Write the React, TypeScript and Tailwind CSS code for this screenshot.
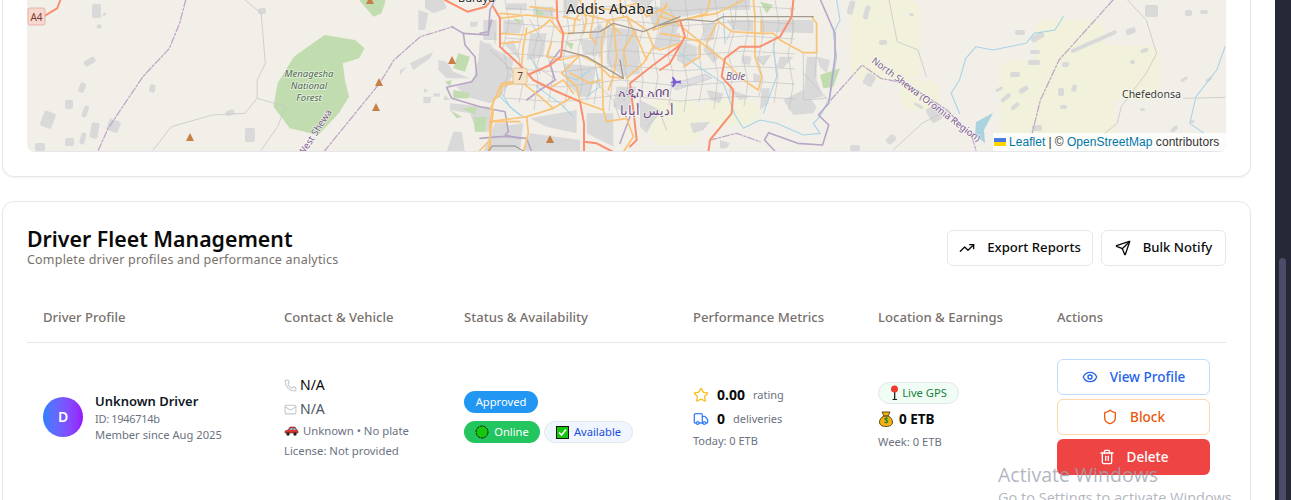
import React from 'react';
import { Eye, Mail, Phone, Send, Shield, Star, Trash2, TrendingUp, Truck } from 'lucide-react';

// Map features are read off the screenshot crops, each with its own crop scale
type Crop = 'left' | 'right' | 'center' | 'east' | 'west';

const toPoints = (crop: Crop, pts: number[]) => {
  const out: string[] = [];
  for (let i = 0; i < pts.length; i += 2) {
    const x = pts[i];
    const y = pts[i + 1] / 3;
    if (crop === 'left') out.push(`${x / 2.45},${y}`);
    if (crop === 'right') out.push(`${640 + x / 2.41},${y}`);
    if (crop === 'center') out.push(`${480 + x / 3},${y}`);
    if (crop === 'east') out.push(`${660 + x / 3},${y}`);
    if (crop === 'west') out.push(`${400 + x / 3},${y}`);
  }
  return out.join(' ');
};

type Line = [Crop, number[]];

const urbanAreas: Line[] = [
  ['west', [75, 0, 130, 0, 140, 25, 100, 40, 75, 25]],
  ['west', [55, 30, 85, 40, 75, 90, 55, 90]],
  ['west', [210, 65, 235, 65, 230, 80, 210, 80]],
  ['west', [115, 180, 140, 185, 160, 215, 210, 235, 140, 235, 115, 210]],
  ['west', [30, 190, 100, 155, 90, 175, 40, 210]],
  ['west', [0, 210, 20, 200, 0, 225]],
  ['west', [240, 120, 340, 180, 330, 250, 300, 290, 270, 310, 200, 290, 170, 260, 220, 240, 235, 180]],
  ['west', [150, 310, 270, 320, 270, 395, 230, 395, 210, 340, 150, 330]],
  ['west', [160, 395, 185, 395, 195, 456, 140, 456]],
  ['west', [285, 370, 320, 370, 320, 456, 250, 456]],
  ['west', [70, 265, 85, 270, 75, 280]],
  ['west', [70, 290, 95, 290, 90, 310, 70, 310]],
  ['west', [100, 280, 120, 280, 120, 290, 100, 290]],
  ['west', [135, 285, 150, 300, 130, 300]],
  ['center', [70, 60, 130, 60, 120, 100, 70, 100]],
  ['center', [150, 100, 200, 100, 190, 170, 140, 180]],
  ['center', [70, 130, 100, 120, 120, 180]],
  ['center', [250, 190, 350, 200, 330, 290, 300, 290, 260, 250]],
  ['center', [0, 130, 30, 130, 100, 230, 60, 250, 0, 300]],
  ['center', [60, 380, 130, 370, 120, 456, 30, 456]],
  ['center', [150, 355, 290, 330, 290, 400, 200, 380]],
  ['center', [320, 340, 400, 340, 400, 440, 320, 400]],
  ['center', [380, 80, 470, 90, 480, 220, 430, 230, 380, 190]],
  ['center', [500, 20, 590, 20, 590, 60, 520, 80]],
  ['center', [540, 90, 600, 100, 600, 130, 520, 150]],
  ['center', [480, 300, 540, 330, 500, 400, 480, 380]],
  ['center', [250, 0, 300, 0, 280, 40, 250, 50]],
  ['center', [450, 0, 520, 0, 500, 30]],
  ['center', [300, 120, 360, 120, 350, 170, 310, 160]],
  ['center', [160, 20, 220, 20, 220, 50, 160, 50]],
  ['center', [80, 10, 140, 10, 140, 30, 80, 30]],
  ['center', [10, 60, 50, 60, 50, 120, 10, 120]],
  ['center', [150, 400, 300, 420, 300, 456, 130, 456]],
  ['center', [330, 100, 360, 70, 380, 100, 360, 180]],
  ['center', [410, 260, 470, 260, 440, 340, 400, 320]],
  ['east', [0, 0, 270, 0, 270, 30, 170, 30, 70, 50, 0, 40]],
  ['east', [200, 60, 280, 60, 280, 95, 220, 90]],
  ['east', [300, 60, 460, 60, 460, 100, 300, 95]],
  ['east', [0, 60, 60, 70, 40, 120, 0, 100]],
  ['east', [130, 70, 170, 70, 160, 120, 130, 125]],
  ['east', [60, 120, 110, 140, 110, 170, 80, 200, 50, 180]],
  ['east', [140, 130, 180, 170, 160, 190, 130, 150]],
  ['east', [245, 165, 275, 170, 270, 195, 245, 190]],
  ['east', [285, 170, 330, 165, 310, 195]],
  ['east', [360, 170, 400, 170, 370, 205, 350, 200]],
  ['east', [280, 220, 300, 225, 300, 245, 280, 245]],
  ['east', [305, 265, 330, 265, 325, 310, 300, 330]],
  ['east', [370, 300, 430, 270, 470, 320, 460, 340, 400, 345]],
  ['east', [440, 170, 470, 170, 470, 240, 490, 290, 430, 300]],
  ['east', [200, 265, 270, 290, 240, 300]],
  ['east', [140, 270, 190, 280, 180, 310, 150, 300]],
  ['east', [90, 370, 150, 365, 130, 390, 100, 400]],
  ['east', [180, 420, 210, 430, 200, 445, 180, 445]],
  ['east', [470, 170, 510, 180, 500, 220, 480, 200]],
];

const greenAreas: Line[] = [
  ['left', [795, 105, 870, 120, 893, 145, 880, 175, 840, 190, 845, 240, 855, 290, 830, 340, 780, 405, 710, 385, 670, 320, 680, 250, 720, 170]],
  ['left', [880, 0, 945, 0, 935, 40, 915, 50]],
  ['west', [175, 160, 210, 170, 195, 215, 160, 205]],
  ['west', [160, 270, 210, 280, 205, 295, 160, 295]],
  ['west', [220, 350, 255, 355, 255, 395, 225, 395]],
  ['west', [135, 245, 155, 240, 150, 260]],
  ['west', [150, 330, 185, 350, 170, 355]],
  ['west', [185, 325, 230, 320, 225, 345]],
  ['center', [100, 55, 125, 60, 115, 72]],
  ['center', [165, 25, 195, 40, 175, 55]],
  ['center', [255, 125, 280, 130, 275, 150]],
  ['center', [0, 350, 20, 350, 15, 385, 0, 385]],
  ['east', [300, 5, 340, 15, 320, 40]],
  ['east', [480, 225, 540, 205, 520, 260, 490, 265]],
];

const trunkRoads: Line[] = [
  ['left', [110, 47, 140, 25, 148, 0]],
  ['left', [1090, 0, 1145, 35, 1190, 20, 1205, 0]],
  ['center', [40, 20, 60, 55, 60, 140, 125, 200, 160, 240, 220, 270, 300, 305, 312, 370, 312, 456]],
  ['center', [230, 0, 232, 60, 250, 100, 243, 170, 210, 195, 150, 222]],
  ['center', [312, 425, 350, 430, 400, 456]],
  ['center', [600, 135, 520, 195, 450, 250, 460, 330, 470, 420, 450, 440]],
  ['east', [0, 210, 30, 190, 75, 110, 60, 60]],
  ['east', [400, 0, 395, 50, 360, 110, 300, 140, 240, 140, 195, 175, 185, 230, 220, 270, 215, 340, 150, 420, 145, 456]],
];

const primaryRoads: Line[] = [
  ['center', [60, 55, 140, 45, 230, 55]],
  ['center', [60, 100, 130, 105, 180, 85, 210, 60, 245, 100, 280, 100]],
  ['center', [140, 85, 130, 140, 125, 195]],
  ['center', [215, 125, 200, 170, 240, 180]],
  ['center', [240, 180, 300, 165, 350, 190, 390, 230, 430, 235]],
  ['center', [300, 165, 245, 220, 290, 260, 300, 305]],
  ['center', [30, 330, 60, 260, 100, 250]],
  ['center', [40, 330, 25, 456]],
  ['center', [30, 365, 140, 350, 220, 325, 270, 295]],
  ['center', [140, 350, 145, 400, 130, 456]],
  ['center', [300, 305, 370, 330, 380, 365, 440, 355]],
  ['center', [370, 330, 365, 190, 365, 120, 385, 60, 440, 50, 500, 90, 520, 140, 490, 190, 440, 235]],
  ['center', [280, 100, 285, 60, 300, 40, 380, 60, 420, 100]],
  ['center', [440, 50, 470, 110, 500, 180]],
  ['center', [440, 355, 460, 410, 430, 456]],
  ['center', [400, 60, 410, 170, 400, 230, 385, 270]],
  ['center', [520, 90, 600, 60]],
  ['center', [540, 30, 600, 60]],
  ['center', [300, 0, 320, 60, 310, 100]],
  ['center', [560, 10, 520, 90]],
  ['center', [600, 130, 540, 150, 520, 140]],
  ['center', [320, 20, 400, 30, 470, 10]],
  ['center', [345, 0, 340, 50, 330, 110, 350, 130]],
  ['center', [420, 0, 430, 50]],
  ['center', [480, 20, 500, 50, 560, 20]],
  ['center', [250, 50, 300, 60]],
  ['center', [150, 20, 230, 30]],
  ['center', [270, 220, 330, 250, 360, 240]],
  ['center', [215, 260, 250, 240, 280, 280]],
  ['center', [100, 250, 130, 250, 180, 290, 220, 325]],
  ['center', [460, 100, 430, 150, 440, 200]],
  ['east', [0, 50, 40, 60, 120, 125, 190, 180, 250, 240, 295, 270, 305, 230, 285, 170, 285, 50, 280, 0]],
  ['east', [0, 100, 60, 110, 120, 125, 120, 170, 70, 200]],
  ['east', [150, 0, 140, 40, 70, 60]],
  ['east', [60, 60, 170, 40, 250, 0]],
  ['east', [170, 70, 140, 130]],
  ['east', [170, 60, 215, 95, 300, 100, 340, 100, 360, 120, 430, 158, 470, 158, 470, 70, 455, 50]],
  ['east', [305, 60, 305, 100]],
  ['west', [270, 456, 270, 370, 280, 300, 300, 285, 305, 250, 340, 245]],
  ['west', [270, 365, 360, 365]],
  ['west', [235, 456, 270, 420]],
  ['west', [305, 130, 360, 125]],
  ['west', [300, 40, 360, 45]],
];

const brownRoads: Line[] = [
  ['center', [265, 100, 360, 95, 400, 70, 490, 95, 600, 50]],
  ['center', [245, 150, 320, 170, 430, 235, 420, 180]],
  ['east', [0, 75, 80, 58, 160, 65, 190, 50, 460, 50]],
];

const thinRoads: Line[] = [
  ['left', [600, 0, 640, 40, 650, 190, 630, 240, 630, 295, 700, 320, 680, 380, 640, 450]],
  ['left', [630, 295, 600, 340, 520, 345, 420, 380, 375, 450]],
  ['right', [600, 0, 620, 125, 670, 150, 690, 230]],
  ['right', [1175, 0, 1220, 60, 1245, 160, 1220, 220, 1160, 320, 1150, 370, 1080, 440]],
  ['right', [1310, 295, 1410, 292]],
  ['right', [610, 450, 680, 370, 740, 330]],
  ['east', [430, 160, 430, 300, 500, 295, 430, 220]],
  ['east', [470, 160, 465, 230]],
  ['east', [285, 170, 310, 195, 330, 165]],
  ['center', [30, 150, 100, 215, 60, 260]],
  ['center', [320, 300, 340, 240, 400, 300, 420, 360]],
  ['center', [500, 380, 540, 340, 560, 390]],
  ['center', [150, 60, 190, 130, 170, 200, 230, 240]],
  ['east', [230, 0, 225, 70, 200, 120]],
  ['east', [400, 60, 395, 130]],
  ['west', [275, 150, 340, 215]],
  ['west', [285, 95, 285, 130]],
];

// Fine street mesh over the city centre
const cityMesh: string[] = [];
for (let i = 0; i < 20; i++) {
  const x = 505 + i * 15;
  cityMesh.push(`${x},${(i * 7) % 14} ${x + 4},${22 + (i * 5) % 11} ${x - 2},${48 + (i * 3) % 13} ${x + 3},${72 + (i * 11) % 15} ${x - 1},${96 + (i * 7) % 17}`);
}
for (let j = 0; j < 7; j++) {
  const y = 8 + j * 15;
  cityMesh.push(`505,${y} 560,${y + 4} 620,${y - 3} 680,${y + 3} 745,${y - 2} 795,${y + 1}`);
}

const rivers: Line[] = [
  ['right', [1020, 50, 1000, 90, 950, 100, 930, 130, 850, 150, 810, 140, 785, 175, 770, 240, 750, 280, 770, 340]],
  ['right', [1410, 140, 1390, 210, 1340, 290, 1325, 370, 1360, 400]],
  ['east', [530, 0, 540, 60, 520, 100, 530, 170, 510, 290, 480, 350, 460, 370, 480, 400, 430, 405, 350, 370, 300, 360, 250, 385, 225, 345, 190, 250, 130, 210, 60, 160]],
  ['east', [340, 130, 350, 230, 310, 340]],
  ['east', [190, 40, 195, 130]],
  ['center', [250, 225, 290, 240, 330, 210]],
  ['center', [60, 290, 100, 330, 130, 350]],
  ['center', [170, 260, 240, 310, 280, 350]],
  ['center', [320, 290, 360, 260, 350, 220]],
  ['center', [150, 170, 180, 220]],
  ['west', [305, 280, 330, 320, 360, 345]],
];

const boundaries: Line[] = [
  ['left', [455, 0, 440, 70, 415, 145, 350, 230, 265, 385, 240, 453]],
  ['left', [795, 453, 930, 250, 965, 180, 1030, 110, 1110, 80]],
  ['right', [460, 300, 535, 195, 580, 235, 640, 250, 740, 330, 800, 410, 810, 453]],
  ['right', [1140, 0, 1075, 90, 1010, 180, 965, 300, 945, 400]],
  ['east', [150, 420, 230, 400, 300, 425]],
];

const thickBoundaries: Line[] = [
  ['west', [155, 80, 190, 100, 265, 105, 270, 30, 285, 0]],
  ['west', [190, 100, 195, 135, 225, 170, 230, 225, 215, 245, 140, 262, 155, 295, 240, 320, 315, 335, 325, 395, 315, 405, 360, 415]],
  ['center', [0, 100, 25, 95, 35, 60]],
  ['center', [0, 415, 60, 410, 85, 410, 140, 415, 155, 456]],
  ['center', [140, 300, 180, 270, 225, 240, 210, 190, 240, 150]],
  ['center', [420, 430, 450, 350]],
  ['right', [435, 0, 470, 100, 470, 170, 455, 310, 430, 345, 455, 375, 440, 435, 380, 430, 310, 398, 300, 420, 325, 453]],
];

// [x, y, width, height, rotation]
const patches: number[][] = [
  [92, 4, 9, 14, 0], [96, 26, 5, 4, -30], [102, 14, 4, 3, -30], [83, 62, 12, 6, -30], [81, 82, 6, 10, 20], [150, 84, 6, 8, 10],
  [45, 110, 12, 16, 20], [65, 100, 8, 9, 0], [85, 105, 5, 12, 20], [92, 122, 8, 16, 10], [110, 118, 12, 12, 20],
  [35, 143, 10, 8, 0], [65, 138, 9, 8, 0], [82, 132, 5, 12, 15], [245, 128, 10, 14, 0], [225, 112, 9, 5, -20],
  [258, 8, 8, 6, 0], [850, 0, 6, 14, 15],
  [866, 5, 5, 14, 15], [879, 40, 8, 5, 0], [868, 72, 10, 12, 30], [909, 13, 5, 3, 0], [925, 110, 12, 16, -30],
  [915, 102, 10, 3, 30], [885, 140, 10, 7, -40], [850, 145, 10, 6, 0], [1030, 38, 14, 6, -30], [1028, 60, 12, 5, 0],
  [1010, 72, 10, 5, 0], [1030, 50, 10, 4, 0], [1015, 30, 10, 5, 0], [1062, 62, 7, 5, 0],
  [1070, 50, 50, 4, -24], [1058, 88, 6, 8, 0], [1073, 84, 5, 7, 20], [1018, 90, 10, 5, -30], [995, 90, 8, 3, -30],
  [1000, 100, 12, 4, -40], [1010, 108, 10, 4, -40], [1032, 125, 10, 6, 0], [1060, 105, 7, 4, 0], [1125, 30, 10, 6, -20],
  [1140, 50, 8, 4, -20], [1145, 5, 13, 12, 0], [1185, 10, 7, 6, 0], [1200, 10, 8, 4, 0], [1130, 60, 5, 4, 0],
  [1180, 80, 8, 3, -30], [1170, 130, 8, 4, -40], [1190, 120, 5, 3, 0], [1140, 108, 5, 3, 0], [1205, 80, 7, 3, -30],
];

const pale: number[][] = [
  [850, 0, 70, 80, 0], [900, 80, 40, 30, 0], [1000, 60, 115, 90, 0], [1035, 20, 70, 60, 0], [1090, 45, 70, 55, 0], [700, 100, 60, 25, 0], [650, 100, 50, 45, 0],
];

const peaks = [[190, 137], [376, 107], [379, 82], [452, 60], [370, 0], [550, 139]];

const MapPolyline = ({ line, className }: { line: Line; className: string }) => (
  <polyline points={toPoints(line[0], line[1])} fill="none" strokeLinejoin="round" strokeLinecap="round" className={className} />
);

const MapDrawing = () => (
  <svg viewBox="27 0 1199 151" width="1199" height="151" className="block">
    <rect x="27" y="0" width="1199" height="151" fill="#f2efe9" />
    <g className="blur-[0.5px]">
      {pale.map((p, i) => (
        <rect key={i} x={p[0]} y={p[1]} width={p[2]} height={p[3]} rx="12" fill="#f1f1dc" />
      ))}
      {urbanAreas.map((l, i) => <polygon key={i} points={toPoints(l[0], l[1])} fill="#d9d9d9" />)}
      {greenAreas.map((l, i) => <polygon key={i} points={toPoints(l[0], l[1])} fill="#c1dcae" />)}
      {patches.map((p, i) => (
        <rect key={i} x={p[0]} y={p[1]} width={p[2]} height={p[3]} rx="2" transform={`rotate(${p[4]} ${p[0]} ${p[1]})`} fill="#d9d9d9" />
      ))}
      <polygon points="670,85 705,74 712,78 676,90" fill="#dedee3" stroke="#c4c4c8" strokeWidth="0.6" />
      <polygon points="976,122 993,113 984,130 985,143 975,135" fill="#aad3df" />
      {cityMesh.map((p, i) => <polyline key={i} points={p} fill="none" stroke="#bdbdbd" strokeWidth="0.6" />)}
      {thinRoads.map((l, i) => <MapPolyline key={i} line={l} className="stroke-[#c6c6c6] stroke-[0.8]" />)}
      {rivers.map((l, i) => <MapPolyline key={i} line={l} className="stroke-[#a8d4e6] stroke-[1.1]" />)}
      {thickBoundaries.map((l, i) => <MapPolyline key={i} line={l} className="stroke-[#b7a6c6] stroke-[1.6]" />)}
      {boundaries.map((l, i) => <MapPolyline key={i} line={l} className="stroke-[#bfa8c6] stroke-[1.3] [stroke-dasharray:7_2_2_2]" />)}
      {primaryRoads.map((l, i) => <MapPolyline key={i} line={l} className="stroke-[#f9c478] stroke-[1.7]" />)}
      {brownRoads.map((l, i) => <MapPolyline key={i} line={l} className="stroke-[#a49a90] stroke-[1.3]" />)}
      {trunkRoads.map((l, i) => <MapPolyline key={i} line={l} className="stroke-[#fa8f70] stroke-[2]" />)}
      <polyline points="488,152 492,146 515,146 525,152" fill="none" stroke="#777" strokeWidth="0.8" />
    </g>
    {peaks.map(([x, y], i) => (
      <polygon key={i} points={`${x - 4},${y + 4} ${x + 4},${y + 4} ${x},${y - 4}`} fill="#c77f45" />
    ))}
    <path d="M670 83l3-2-1-4h1.500l3 4 4-.5 1-.5-1 2 1 2-1-.5-4-.5-3 4H672l1-4z" fill="#7b5fd0" />
    <rect x="28" y="8" width="17" height="17" rx="2" fill="#f6d8d0" stroke="#e3a99b" strokeWidth="0.8" />
    <text x="36.500" y="21" textAnchor="middle" fontSize="10" fill="#7a3a2e" fontFamily="Noto Sans">A4</text>
    <rect x="513" y="68" width="14" height="16" rx="2" fill="#f7e3c8" stroke="#dcbb8d" strokeWidth="0.8" />
    <text x="520" y="80" textAnchor="middle" fontSize="10" fill="#5a4630" fontFamily="Noto Sans">7</text>
    <g fontFamily="Noto Sans" stroke="#ffffff" strokeOpacity="0.6" strokeWidth="1.5" paintOrder="stroke">
      <text x="566" y="14" fontSize="15" fill="#222222">Addis Ababa</text>
      <text x="458" y="2" fontSize="11" fill="#222222">Burayu</text>
      <text x="309" y="77" textAnchor="middle" fontSize="9.500" fontStyle="italic" fill="#4c664c">Menagesha</text>
      <text x="309" y="89" textAnchor="middle" fontSize="9.500" fontStyle="italic" fill="#4c664c">National</text>
      <text x="309" y="101" textAnchor="middle" fontSize="9.500" fontStyle="italic" fill="#4c664c">Forest</text>
      <text x="726" y="80" fontSize="10" fontStyle="italic" fill="#7a5f8c">Bole</text>
      <text x="1122" y="98" fontSize="10.500" fill="#3a3a3a">Chefedonsa</text>
      <text x="618" y="97" fontSize="13" fill="#6f4f85">አዲስ አበባ</text>
      <text x="620" y="115" fontSize="13" fill="#6f4f85">أديس أبابا</text>
      <text transform="translate(871 62) rotate(37)" fontSize="9.500" fill="#7b5a8c">North Shewa (Oromia Region)</text>
      <text transform="translate(303 157) rotate(-57)" fontSize="9.500" fill="#7b5a8c">West Shewa</text>
    </g>
  </svg>
);

// Emoji drawn by hand, the system emoji font is not available
const CarEmoji = () => (
  <svg width="15" height="10" viewBox="0 0 15 10" className="shrink-0">
    <path d="M1 5l3-1 2-3h5l2 3 1 1v2H1z" fill="#d9362b" stroke="#5c1a14" strokeWidth="0.5" />
    <path d="M5.500 4l1.200-2h1.800v2zM9.500 2h1.300l1.200 2H9.500z" fill="#6ec6ea" />
    <circle cx="4" cy="8" r="1.700" fill="#222222" />
    <circle cx="11" cy="8" r="1.700" fill="#222222" />
  </svg>
);

const CircleEmoji = () => (
  <svg width="14" height="14" viewBox="0 0 14 14" className="shrink-0">
    <circle cx="7" cy="7" r="6" fill="#16c60c" stroke="#111111" strokeWidth="0.9" strokeDasharray="3 0.6" />
  </svg>
);

const CheckEmoji = () => (
  <svg width="13" height="13" viewBox="0 0 13 13" className="shrink-0">
    <rect x="0.500" y="0.500" width="12" height="12" fill="#16c60c" stroke="#111111" />
    <path d="M3 6.500l2.500 2.500L10 3.500" fill="none" stroke="#ffffff" strokeWidth="1.600" />
  </svg>
);

const PinEmoji = () => (
  <svg width="9" height="16" viewBox="0 0 9 16" className="shrink-0">
    <rect x="4" y="7" width="1.300" height="8" fill="#222222" />
    <rect x="2.500" y="14" width="4.500" height="1" fill="#222222" />
    <circle cx="4.500" cy="4" r="3.500" fill="#f03a2e" />
  </svg>
);

const BagEmoji = () => (
  <svg width="14" height="16" viewBox="0 0 14 16" className="shrink-0">
    <path d="M3 1h8L9 5c3 1 4.500 4 4.500 6 0 3-2.500 4.500-6.500 4.500S.500 14 .500 11c0-2 1.500-5 4.500-6z" fill="#f7b20f" stroke="#3a2a06" strokeWidth="0.8" />
    <path d="M5 5h4" stroke="#3a2a06" />
    <text x="7" y="13" textAnchor="middle" fontSize="8" fontWeight="700" fill="#0f8a3a" fontFamily="Noto Sans">$</text>
  </svg>
);

const columns = ['Driver Profile', 'Contact & Vehicle', 'Status & Availability', 'Performance Metrics', 'Location & Earnings', 'Actions'];

const App: React.FC = () => {
  return (
    <div className="relative flex h-[500px] w-full overflow-hidden bg-white font-['Noto_Sans',sans-serif]">
      <div className="flex-1 min-w-0 pl-[2px] pr-6">
        {/* Live map card, scrolled so only its lower part shows */}
        <div className="rounded-b-xl border border-t-0 border-[#e5e7eb] px-6 pb-6 shadow-[0_1px_2px_rgba(0,0,0,0.05)]">
          <div className="relative overflow-hidden rounded-b-lg border-b border-[#e5e7eb]">
            <MapDrawing />
            <div className="absolute bottom-0 right-0 flex h-[18px] w-[233px] items-center bg-white/80 pl-[1px] font-['Liberation_Sans',sans-serif] text-xs tracking-[0.06px] text-[#333333]">
              <svg width="12" height="8" viewBox="0 0 12 8" className="mr-[3px]">
                <rect width="12" height="4" fill="#4c7be1" />
                <rect y="4" width="12" height="4" fill="#ffd500" />
              </svg>
              <span className="text-[#0078a8]">Leaflet</span>
              <span className="mx-[3px]">|</span>
              <span>©&nbsp;</span>
              <span className="text-[#0078a8]">OpenStreetMap</span>
              <span>&nbsp;contributors</span>
            </div>
          </div>
        </div>

        {/* Driver table card */}
        <div className="mt-6 rounded-xl border border-[#e5e7eb] px-6 pt-6 pb-6 shadow-[0_1px_2px_rgba(0,0,0,0.05)]">
          <div className="flex items-start justify-between">
            <div>
              <h2 className="text-[21.3px] leading-[26px] font-semibold text-[#0a0a0a]">Driver Fleet Management</h2>
              <p className="text-[12.5px] leading-[16px] tracking-[0.2px] text-[#78716c]">Complete driver profiles and performance analytics</p>
            </div>
            <div className="mt-[4px] flex gap-2">
              <button className="flex h-[36px] w-[146px] items-center justify-center gap-3 rounded-md border border-[#e5e7eb] text-[13.15px] font-medium text-[#0a0a0a]">
                <TrendingUp size={16} />
                Export Reports
              </button>
              <button className="flex h-[36px] w-[125px] items-center justify-center gap-3 rounded-md border border-[#e5e7eb] text-[13.15px] font-medium text-[#0a0a0a]">
                <Send size={16} />
                Bulk Notify
              </button>
            </div>
          </div>

          <div className="mt-[26px] grid h-[49px] grid-cols-[241px_180px_229px_185px_179px_169px] items-center border-b border-[#e5e7eb] px-4">
            {columns.map(c => (
              <div key={c} className="text-[13.1px] font-medium text-[#78716c]">{c}</div>
            ))}
          </div>

          <div className="grid grid-cols-[241px_180px_229px_185px_179px_169px] items-center px-4 py-4">
            <div className="flex items-center gap-3">
              <div className="flex h-10 w-10 items-center justify-center rounded-full bg-gradient-to-r from-blue-500 to-purple-600 text-sm font-semibold text-white">D</div>
              <div>
                <div className="text-[13px] leading-[18px] font-semibold text-[#111827]">Unknown Driver</div>
                <div className="mt-[1px] text-[11px] leading-4 tracking-[-0.3px] text-[#6b7280]">ID: 1946714b</div>
                <div className="text-[11.2px] leading-4 text-[#6b7280]">Member since Aug 2025</div>
              </div>
            </div>

            <div className="text-[11.3px] text-[#6b7280]">
              <div className="flex h-6 items-center gap-[3px] text-sm text-[#0a0a0a]">
                <Phone size={13} className="text-[#c4c8cf]" />
                N/A
              </div>
              <div className="flex h-6 items-center gap-[3px] text-sm text-[#4b5563]">
                <Mail size={13} className="text-[#c4c8cf]" />
                N/A
              </div>
              <div className="flex h-[20px] items-center gap-[4px]">
                <CarEmoji />
                Unknown • No plate
              </div>
              <div className="flex h-[20px] items-center">License: Not provided</div>
            </div>

            <div className="flex flex-col gap-2 text-[11.2px]">
              <div className="flex">
                <span className="flex h-[22px] w-[74px] items-center justify-center rounded-full bg-[#2196f3] text-white">Approved</span>
              </div>
              <div className="flex gap-1">
                <span className="flex h-[22px] w-[76px] items-center justify-center gap-[5px] rounded-full bg-[#22c55e] text-white">
                  <CircleEmoji />
                  Online
                </span>
                <span className="flex h-[22px] w-[89px] items-center justify-center gap-[5px] rounded-full border border-[#e5e7eb] bg-[#eff6ff] text-[#1d4ed8]">
                  <CheckEmoji />
                  Available
                </span>
              </div>
            </div>

            <div className="text-[11px] text-[#6b7280]">
              <div className="flex h-6 items-center">
                <Star size={16} className="text-[#fbbf24]" />
                <span className="ml-[8px] text-sm font-bold text-[#0a0a0a]">0.00</span>
                <span className="ml-2">rating</span>
              </div>
              <div className="flex h-6 items-center">
                <Truck size={16} className="text-[#3b82f6]" />
                <span className="ml-[8px] text-sm font-bold text-[#0a0a0a]">0</span>
                <span className="ml-2">deliveries</span>
              </div>
              <div className="flex h-[20px] items-center">Today: 0 ETB</div>
            </div>

            <div className="text-[11.2px]">
              <span className="flex h-[22px] w-[81px] items-center justify-center gap-[3px] rounded-full border border-[#e5e7eb] bg-[#f0fdf4] text-[#15803d]">
                <PinEmoji />
                Live GPS
              </span>
              <div className="mt-[3px] flex h-[24px] items-center gap-[6px] pl-[1px] text-[13.5px] font-bold text-[#0a0a0a]">
                <BagEmoji />
                0 ETB
              </div>
              <div className="mt-[1px] flex h-[20px] items-center text-[#6b7280]">Week: 0 ETB</div>
            </div>

            <div className="flex w-[153px] flex-col gap-1 text-[13.5px] font-medium">
              <button className="flex h-9 items-center justify-center gap-3 rounded-md border border-[#bfdbfe] text-[#2563eb]">
                <Eye size={16} />
                View Profile
              </button>
              <button className="flex h-9 items-center justify-center gap-3 rounded-md border border-[#fed7aa] text-[#ea580c]">
                <Shield size={16} />
                Block
              </button>
              <button className="flex h-9 items-center justify-center gap-3 rounded-md bg-[#ef4444] text-white">
                <Trash2 size={16} />
                Delete
              </button>
            </div>
          </div>
        </div>
      </div>

      {/* Browser scrollbar */}
      <div className="h-full w-4 shrink-0 bg-[#252836] pl-[4px] pt-[258px]">
        <div className="h-full w-[7px] rounded-t-sm bg-[#4a4c68]" />
      </div>

      {/* OS watermark */}
      <div className="pointer-events-none absolute left-[998px] top-[462px] font-['Open_Sans',sans-serif] text-[#9ca3af]/80">
        <div className="text-[19.5px] leading-[26px]">Activate Windows</div>
        <div className="text-[14.5px] leading-[20px]">Go to Settings to activate Windows.</div>
      </div>
    </div>
  );
};

export default App;
